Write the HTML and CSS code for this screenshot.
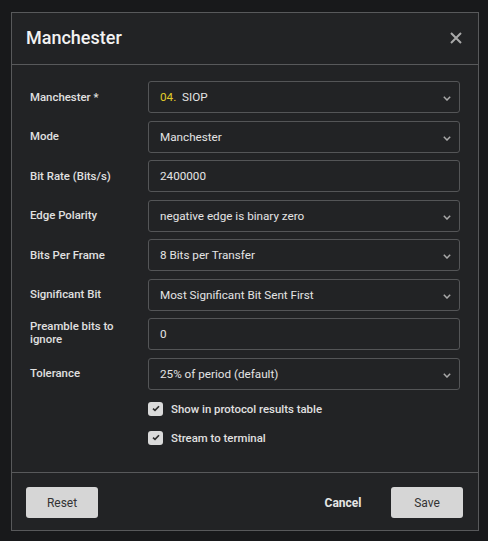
FILE: index.html
```html
<!DOCTYPE html>
<html>
<head>
<meta charset="utf-8">
<link rel="stylesheet" href="styles.css">
</head>
<body>
<div class="dialog">
  <div class="header">
    <div class="title">Manchester</div>
    <svg class="close" width="12" height="12" viewBox="0 0 12 12"><path d="M1 1L11 11M11 1L1 11" stroke="#a9a9a9" stroke-width="2" fill="none"/></svg>
  </div>
  <div class="body">
    <div class="form">
      <div class="label">Manchester *</div>
      <div class="field select"><span class="num">04.</span>&nbsp; SIOP<svg class="chev" width="8" height="5" viewBox="0 0 8 5"><polyline points="0.8,0.8 4,4 7.2,0.8" stroke="#a9a9a9" stroke-width="1.5" fill="none"/></svg></div>
      <div class="label">Mode</div>
      <div class="field select">Manchester<svg class="chev" width="8" height="5" viewBox="0 0 8 5"><polyline points="0.8,0.8 4,4 7.2,0.8" stroke="#a9a9a9" stroke-width="1.5" fill="none"/></svg></div>
      <div class="label">Bit Rate (Bits/s)</div>
      <div class="field">2400000</div>
      <div class="label">Edge Polarity</div>
      <div class="field select">negative edge is binary zero<svg class="chev" width="8" height="5" viewBox="0 0 8 5"><polyline points="0.8,0.8 4,4 7.2,0.8" stroke="#a9a9a9" stroke-width="1.5" fill="none"/></svg></div>
      <div class="label">Bits Per Frame</div>
      <div class="field select">8 Bits per Transfer<svg class="chev" width="8" height="5" viewBox="0 0 8 5"><polyline points="0.8,0.8 4,4 7.2,0.8" stroke="#a9a9a9" stroke-width="1.5" fill="none"/></svg></div>
      <div class="label">Significant Bit</div>
      <div class="field select">Most Significant Bit Sent First<svg class="chev" width="8" height="5" viewBox="0 0 8 5"><polyline points="0.8,0.8 4,4 7.2,0.8" stroke="#a9a9a9" stroke-width="1.5" fill="none"/></svg></div>
      <div class="label two">Preamble bits to ignore</div>
      <div class="field">0</div>
      <div class="label">Tolerance</div>
      <div class="field select">25% of period (default)<svg class="chev" width="8" height="5" viewBox="0 0 8 5"><polyline points="0.8,0.8 4,4 7.2,0.8" stroke="#a9a9a9" stroke-width="1.5" fill="none"/></svg></div>
    </div>
    <div class="checks">
      <div class="check"><span class="box"><svg width="8" height="7" viewBox="0 0 8 7"><polyline points="1,3.6 3,5.4 7,1.2" stroke="#2a2a2a" stroke-width="1.6" fill="none"/></svg></span>Show in protocol results table</div>
      <div class="check"><span class="box"><svg width="8" height="7" viewBox="0 0 8 7"><polyline points="1,3.6 3,5.4 7,1.2" stroke="#2a2a2a" stroke-width="1.6" fill="none"/></svg></span>Stream to terminal</div>
    </div>
  </div>
  <div class="footer">
    <button class="btn light">Reset</button>
    <div class="spacer"></div>
    <button class="btn text">Cancel</button>
    <button class="btn light">Save</button>
  </div>
</div>
</body>
</html>
```
FILE: styles.css
```css
html, body {
  margin: 0;
  padding: 0;
}
body {
  background: #18191b;
  font-family: Roboto, "Liberation Sans", sans-serif;
  width: 488px;
  height: 541px;
  padding: 12px 0 0 11px;
  box-sizing: border-box;
}
.dialog {
  width: 468px;
  height: 519px;
  box-sizing: border-box;
  border: 1px solid #58595b;
  background: #222325;
  display: flex;
  flex-direction: column;
}
.header {
  height: 51px;
  border-bottom: 1px solid #58595b;
  display: flex;
  align-items: center;
  justify-content: space-between;
  padding: 0 16px 0 14px;
  flex: none;
}
.title {
  color: #f2f2f2;
  font-size: 18px;
  font-weight: 500;
  margin-bottom: 2px;
}
.close {
  display: block;
  margin-bottom: 2px;
}
.body {
  flex: 1;
  padding: 16px 18px 0 18px;
}
.form {
  display: grid;
  grid-template-columns: 118px 1fr;
  row-gap: 7.5px;
  align-items: center;
}
.label {
  color: #e0e0e0;
  font-size: 11.4px;
  font-weight: 500;
  line-height: 13px;
}
.label.two {
  padding-right: 20px;
  margin-top: -2px;
}
.field {
  height: 32px;
  box-sizing: border-box;
  border: 1px solid #545557;
  border-radius: 3px;
  color: #e4e4e4;
  font-size: 11.7px;
  display: flex;
  align-items: center;
  padding: 0 12px 0 11px;
  position: relative;
}
.num {
  color: #e0cc2a;
}
.chev {
  position: absolute;
  right: 8px;
  top: 14px;
}
.checks {
  margin-left: 118px;
  margin-top: 8px;
  display: flex;
  flex-direction: column;
  gap: 7px;
}
.check {
  height: 22px;
  display: flex;
  align-items: center;
  color: #e0e0e0;
  font-size: 11.4px;
  font-weight: 500;
}
.box {
  width: 15px;
  height: 14px;
  border-radius: 3px;
  background: #dadada;
  display: flex;
  align-items: center;
  justify-content: center;
  margin-right: 8px;
}
.box svg {
  display: block;
}
.footer {
  height: 58px;
  border-top: 1px solid #58595b;
  box-sizing: border-box;
  display: flex;
  align-items: flex-start;
  padding: 14px 15px 0 14px;
  flex: none;
}
.spacer {
  flex: 1;
}
.btn {
  width: 72px;
  height: 31px;
  border: none;
  border-radius: 3px;
  font-family: Roboto, "Liberation Sans", sans-serif;
  font-size: 12px;
  padding: 0;
}
.btn.light {
  background: #d6d6d6;
  color: #333;
}
.btn.text {
  background: transparent;
  color: #e6e6e6;
  font-weight: 700;
  margin-right: 12px;
}
```
